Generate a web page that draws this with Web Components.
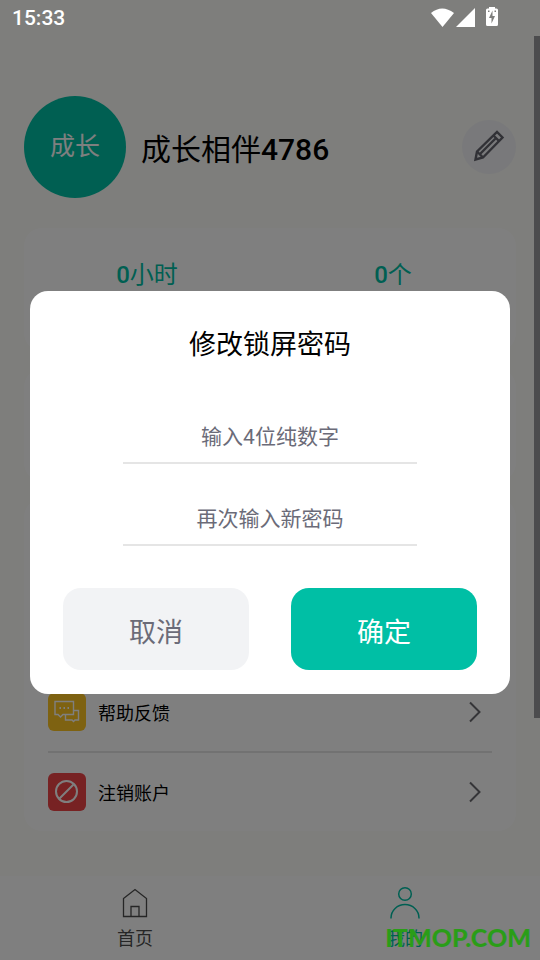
<!DOCTYPE html>
<html lang="zh-CN">
<head>
<meta charset="utf-8">
<meta name="viewport" content="width=device-width, initial-scale=1">
<title>修改锁屏密码</title>
<style>
html, body { height: 100%; }
body { margin: 0; font-family: Roboto, "Noto Sans CJK SC", sans-serif; color: #000; }
b { font-weight: 500; }
</style>
</head>
<body>
<phone-screen>
  <status-bar slot="status" time="15:33"></status-bar>
  <profile-header avatar="成长">成长相伴<b>4786</b></profile-header>
  <info-card>
    <stats-row>
      <stat-item><b>0</b>小时</stat-item>
      <stat-item><b>0</b>个</stat-item>
    </stats-row>
  </info-card>
  <info-card class="tools"></info-card>
  <info-card grow>
    <menu-row icon="feedback" href="#feedback">帮助反馈</menu-row>
    <menu-row icon="cancel" href="#cancel">注销账户</menu-row>
  </info-card>
  <tab-bar slot="tabs">
    <tab-item icon="home" href="#home">首页</tab-item>
    <tab-item icon="me" href="#me" active>我的</tab-item>
  </tab-bar>
  <password-dialog slot="dialog" heading="修改锁屏密码">
    <pin-field label="输入4位纯数字"></pin-field>
    <pin-field label="再次输入新密码"></pin-field>
    <dialog-button slot="actions">取消</dialog-button>
    <dialog-button slot="actions" primary>确定</dialog-button>
  </password-dialog>
  <site-mark slot="mark">ITMOP.COM</site-mark>
</phone-screen>

<script>
const define = (name, render) => customElements.define(name, class extends HTMLElement {
  constructor() { super(); this.attachShadow({ mode: 'open' }); }
  connectedCallback() {
    const t = document.createElement('template');
    t.innerHTML = render(this);
    this.shadowRoot.replaceChildren(t.content.cloneNode(true));
  }
});

const icons = {
  feedback: `<svg width="38" height="38" viewBox="0 0 38 38" fill="none" stroke="#fff" stroke-width="1.4"><path d="M7 8.500H25.500V21.500H15L12.500 24L10 21.500H7Z"/><path d="M25.500 17.500H30.500V27H27L25.500 28.500L24 27H17.500V21.500"/><path d="M11.500 15h1.500M15.500 15h1.500M19.500 15h1.500" stroke-width="2"/></svg>`,
  cancel: `<svg width="38" height="38" viewBox="0 0 38 38" fill="none" stroke="#fff" stroke-width="2"><circle cx="18.500" cy="18.500" r="10.500"/><path d="M11.500 25.500L25.500 11.500"/></svg>`,
  home: `<svg width="36" height="36" viewBox="0 0 36 36" fill="none" stroke="#4c4c4c" stroke-width="1.300"><path d="M6.500 14.500L18 5.500L29.500 14.500V32.500H6.500Z"/><path d="M14 32.500V22.500H22V32.500"/></svg>`,
  me: `<svg width="36" height="36" viewBox="0 0 36 36" fill="none" stroke="#00bfa5" stroke-width="1.500"><circle cx="18" cy="10" r="6.300"/><path d="M4 34.500V34A14 13.500 0 0 1 32 34V34.500"/></svg>`
};

define('phone-screen', () => `
<style>
  :host { display: grid; min-height: 100%; position: relative; overflow: hidden; background: #fcfcf8; }
  .page { display: flex; flex-direction: column; }
  main { flex: 1; display: flex; flex-direction: column; padding: 96px 24px 45px; }
  .shade { position: absolute; inset: 0; background: rgba(0,0,0,.5); display: grid; place-items: center; padding: 25px 30px 0; }
  .thumb { position: absolute; right: 0; top: 36px; width: 6px; height: 71%; background: #4c4c4e; }
  ::slotted([slot=dialog]) { width: 100%; }
  .status { position: absolute; inset: 0 0 auto; }
  .mark { position: absolute; right: 9px; bottom: 6px; }
</style>
<div class="page"><main><slot></slot></main><slot name="tabs"></slot></div>
<div class="shade"><slot name="dialog"></slot></div>
<div class="thumb"></div>
<div class="status"><slot name="status"></slot></div>
<div class="mark"><slot name="mark"></slot></div>`);

define('status-bar', el => `
<style>
  :host { display: flex; align-items: center; justify-content: space-between; height: 36px; padding: 0 40px 0 12px; box-sizing: border-box; color: #fff; font-size: 21px; font-weight: 500; }
</style>
<span>${el.getAttribute('time')}</span>
<svg width="70" height="36" viewBox="0 0 70 36" fill="#fff"><path d="M1 13Q12 4 24 13L12.500 27Z"/><path d="M26 27L45 8V27Z"/><path fill-rule="evenodd" d="M57.500 8.500H59V7H65V8.500H66.500Q68 8.500 68 10V24.500Q68 26 66.500 26H57.500Q56 26 56 24.500V10Q56 8.500 57.500 8.500ZM62.500 10.500L59 18H61.500V23.500L65 16H62.500ZM58 10.500V12H59.500V10.500ZM64.500 10.500V12H66V10.500Z"/></svg>`);

define('profile-header', el => `
<style>
  :host { display: flex; align-items: center; }
  .avatar { width: 102px; height: 102px; border-radius: 50%; background: #00bfa5; color: #fff; font-size: 25px; line-height: 38px; display: grid; place-items: center; }
  h1 { flex: 1; margin: 5px 0 0 15px; font-size: 30px; line-height: 44px; font-weight: 400; }
  button { width: 54px; height: 54px; padding: 0; border: 0; border-radius: 50%; background: #f2f3f6; display: grid; place-items: center; }
</style>
<div class="avatar">${el.getAttribute('avatar')}</div>
<h1><slot></slot></h1>
<button aria-label="编辑"><svg width="54" height="54" viewBox="0 0 54 54" fill="none" stroke="#62626c" stroke-width="2.400"><path d="M13.500 39.500L15 31.500L35 12L40.500 17.500L21 37.500Z"/><path d="M31.500 15.500L37 21M15 31.500L21 37.500M18.500 33.500L33.500 18.500"/></svg></button>`);

define('info-card', () => `
<style>
  :host { display: block; margin-top: 30px; border-radius: 18px; background: #fff; }
  :host(.tools) { min-height: 112px; margin-top: 18px; }
  :host([grow]) { flex: 1; display: flex; flex-direction: column; justify-content: flex-end; margin-top: 18px; padding: 0 24px; }
</style><slot></slot>`);

define('stats-row', () => `
<style>:host { display: grid; grid-template-columns: 1fr 1fr; min-height: 123px; align-items: start; padding-top: 29px; box-sizing: border-box; }</style><slot></slot>`);
define('stat-item', () => `
<style>:host { display: block; text-align: center; color: #00bfa5; font-size: 24px; line-height: 36px; }</style><slot></slot>`);

define('menu-row', el => `
<style>
  :host { display: block; }
  :host(:not(:last-child)) { border-bottom: 2px solid #e5e5e5; }
  a { display: flex; align-items: center; gap: 12px; height: 78px; padding-right: 10px; font-size: 18px; color: #000; text-decoration: none; }
  .label { flex: 1; }
  .icon { width: 38px; height: 38px; border-radius: 6px; background: ${el.getAttribute('icon') === 'cancel' ? '#ee4447' : '#fdc422'}; }
</style>
<a href="${el.getAttribute('href')}"><span class="icon">${icons[el.getAttribute('icon')]}</span><span class="label"><slot></slot></span>
<svg width="14" height="22" viewBox="0 0 14 22" fill="none" stroke="#6b6b70" stroke-width="2"><path d="M2 1.500L11.500 11L2 20.500"/></svg></a>`);

define('tab-bar', () => `
<style>:host { display: grid; grid-template-columns: 1fr 1fr; background: #fff; }</style><slot></slot>`);
define('tab-item', el => `
<style>
  a { display: flex; flex-direction: column; align-items: center; gap: 6px; height: 84px; padding-top: 8px; box-sizing: border-box; font-size: 18px; line-height: 26px; text-decoration: none; color: #4c4c4c; }
  :host([active]) a { color: #00bfa5; }
</style>
<a href="${el.getAttribute('href')}">${icons[el.getAttribute('icon')]}<span><slot></slot></span></a>`);

define('password-dialog', el => `
<style>
  :host { display: block; }
  section { background: #fff; border-radius: 18px; padding: 34px 33px 24px; }
  h2 { margin: 0 0 49px; text-align: center; font-size: 27px; line-height: 40px; font-weight: 400; color: #000; }
  .fields { display: grid; gap: 32px; padding: 0 60px; }
  .actions { display: grid; grid-template-columns: 1fr 1fr; gap: 42px; margin-top: 42px; }
</style>
<section role="dialog" aria-label="${el.getAttribute('heading')}"><h2>${el.getAttribute('heading')}</h2><div class="fields"><slot></slot></div><div class="actions"><slot name="actions"></slot></div></section>`);

define('pin-field', el => `
<style>
  :host { display: block; }
  input { display: block; width: 100%; height: 50px; box-sizing: border-box; padding: 0 0 3px; border: 0; border-bottom: 2px solid #e5e5e5; background: none; text-align: center; font: inherit; font-size: 21px; outline: 0; }
  input::placeholder { color: #6b6b78; opacity: 1; }
</style>
<input type="text" inputmode="numeric" maxlength="4" aria-label="${el.getAttribute('label')}" placeholder="${el.getAttribute('label')}">`);

define('dialog-button', () => `
<style>
  :host { display: block; }
  button { display: block; width: 100%; height: 82px; padding: 2px 0 0; border: 0; border-radius: 18px; background: #f2f3f5; color: #6b6b78; font: inherit; font-size: 27px; }
  :host([primary]) button { background: #00bfa5; color: #fff; }
</style>
<button type="button"><slot></slot></button>`);

define('site-mark', () => `
<style>:host { display: block; font: 900 25px/34px Lato, sans-serif; color: #2a9d18; }</style><slot></slot>`);
</script>
</body>
</html>
